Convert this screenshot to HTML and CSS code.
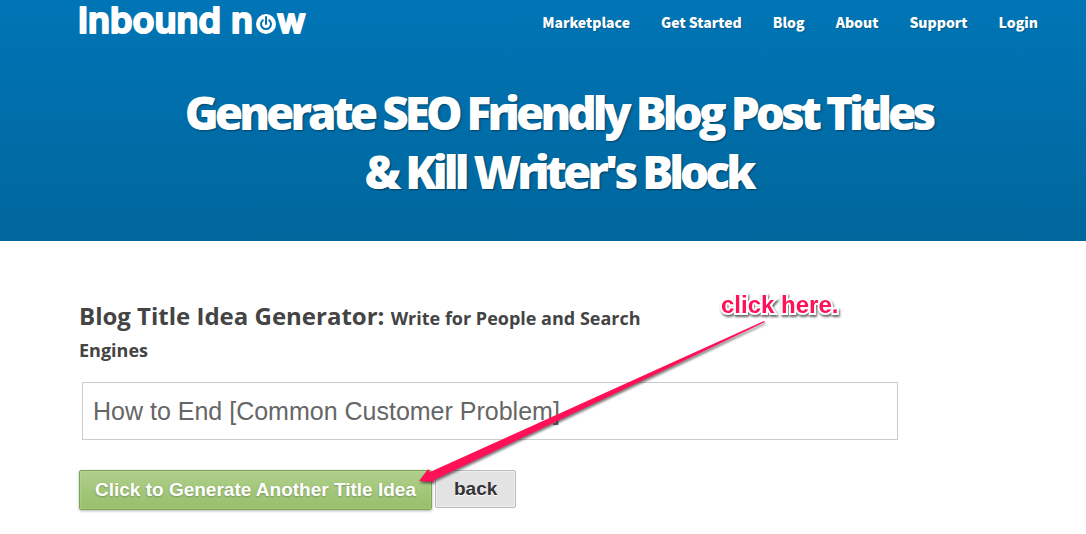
FILE: index.html
```html
<!DOCTYPE html>
<html lang="en">
<head>
    <meta charset="UTF-8">
    <meta name="viewport" content="width=device-width, initial-scale=1.0">
    <title>Blog Title Idea Generator | Inbound Now</title>
    <link rel="stylesheet" href="styles.css">
</head>
<body>
    <header class="site-header">
        <div class="top-bar">
            <a href="#" class="logo">
                <svg width="230" height="42" viewBox="0 0 230 42">
                    <text x="-1" y="32">Inbound</text>
                    <text x="152" y="32">n</text>
                    <circle cx="187" cy="23" r="10" fill="#fff"/>
                    <path d="M183.8 19.2a5 5 0 1 0 6.4 0M187 16v7" fill="none" stroke="#0072b2" stroke-width="2" stroke-linecap="round"/>
                    <text x="198" y="32" class="logo-end">w</text>
                </svg>
            </a>
            <nav class="main-nav">
                <a href="#">Marketplace</a>
                <a href="#">Get Started</a>
                <a href="#">Blog</a>
                <a href="#">About</a>
                <a href="#">Support</a>
                <a href="#">Login</a>
            </nav>
        </div>
        <h1>Generate SEO Friendly Blog Post Titles<br>&amp; Kill Writer's Block</h1>
    </header>
    <main class="content">
        <form class="generator">
            <h2><label for="title-idea">Blog Title Idea Generator: <small>Write for People and Search Engines</small></label></h2>
            <input type="text" id="title-idea" class="title-idea" value="How to End [Common Customer Problem]">
            <div class="actions">
                <button type="button" class="btn btn-green">Click to Generate Another Title Idea</button>
                <button type="button" class="btn btn-grey">back</button>
            </div>
        </form>
        <!-- pointer to the generate button -->
        <svg class="arrow" viewBox="0 0 360 180">
            <polygon points="4,170 13,158 15,161 349,10 350,11 19,169 19,171"/>
        </svg>
        <span class="hint">click here.</span>
    </main>
</body>
</html>
```

FILE: styles.css
```css
body {
    margin: 0;
    background-color: #fff;
    font-family: "Open Sans", sans-serif;
}

.site-header {
    padding: 0 48px 40px 79px;
    background: linear-gradient(#0075b6, #00669c);
    color: #fff;
}

.top-bar {
    display: flex;
    justify-content: space-between;
    align-items: center;
    height: 43px;
}

.logo svg {
    display: block;
}

.logo text {
    fill: #fff;
    stroke: #fff;
    stroke-width: 2px;
    stroke-linejoin: round;
    font-family: Inter, sans-serif;
    font-size: 36px;
    font-weight: 600;
}

.logo .logo-end {
    font-size: 34px;
}

.main-nav {
    display: flex;
    gap: 31px;
}

.main-nav a {
    color: #fff;
    font-family: "Noto Sans CJK SC", sans-serif;
    font-size: 14px;
    font-weight: 900;
    line-height: 24px;
    text-decoration: none;
    text-shadow: 1px 1px 1px rgba(0, 0, 0, 0.2);
}

h1 {
    margin: 40px 0 0;
    font-size: 46px;
    font-weight: 800;
    line-height: 59px;
    letter-spacing: -4px;
    text-align: center;
    text-shadow: 1px 1px 2px rgba(0, 0, 0, 0.4);
}

.content {
    position: relative;
    padding: 59px 79px 24px;
}

.generator {
    max-width: 819px;
}

h2 {
    max-width: 600px;
    margin: 0 0 18px;
    color: #444;
    font-size: 24px;
    font-weight: 700;
    line-height: 32px;
}

h2 small {
    font-size: 18px;
    line-height: 18px;
}

.title-idea {
    display: block;
    box-sizing: border-box;
    width: calc(100% - 3px);
    height: 58px;
    margin: 0 0 30px 3px;
    padding: 0 10px;
    border: 1px solid #ccc;
    color: #666;
    font-family: "Liberation Sans", Arial, sans-serif;
    font-size: 25px;
}

.actions {
    display: flex;
    align-items: flex-start;
    gap: 3px;
}

.btn {
    border-radius: 2px;
    font-family: "Liberation Sans", Arial, sans-serif;
    font-size: 19px;
    font-weight: bold;
    line-height: 36px;
}

.btn-green {
    padding: 1px 15px;
    border: 1px solid #7aa652;
    background: linear-gradient(#afcf8c, #98bf6a);
    box-shadow: 0 1px 3px rgba(0, 0, 0, 0.3), inset 0 0 2px rgba(255, 255, 255, 0.4);
    color: #fff;
    text-shadow: 0 1px 2px rgba(0, 0, 0, 0.25);
}

.btn-grey {
    padding: 0 18px;
    border: 1px solid #bbb;
    background-color: #e3e3e3;
    box-shadow: inset 0 0 1px 1px #f0f0f0;
    color: #333;
    text-shadow: 0 1px 0 #fff;
}

.arrow {
    position: absolute;
    top: 70px;
    left: 415px;
    width: 360px;
    height: 180px;
    fill: #ff1158;
    filter: drop-shadow(1px 2px 1px rgba(0, 0, 0, 0.5));
    pointer-events: none;
}

.hint {
    position: absolute;
    top: 50px;
    left: 721px;
    color: #ff1158;
    font-family: "Liberation Sans", Arial, sans-serif;
    font-size: 24px;
    font-weight: bold;
    line-height: 28px;
    -webkit-text-stroke: 4px #fff;
    paint-order: stroke fill;
    filter: drop-shadow(1px 2px 1px rgba(0, 0, 0, 0.6));
}
```
